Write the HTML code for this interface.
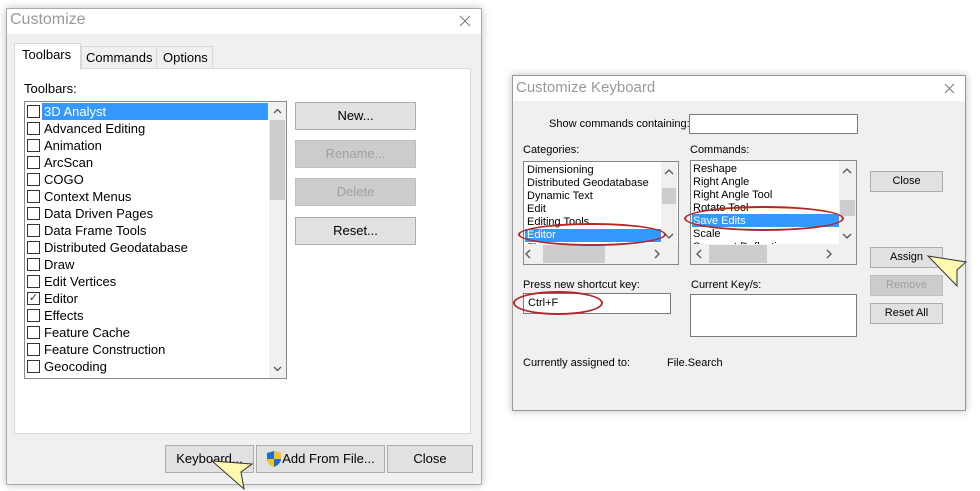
<!DOCTYPE html>
<html><head><meta charset="utf-8"><style>
*{margin:0;padding:0;box-sizing:border-box}
body{width:980px;height:491px;background:#fff;position:relative;overflow:hidden;font-family:"Liberation Sans",sans-serif;color:#000}
.a{position:absolute}
.t{font-size:13px;white-space:nowrap;line-height:17px}
.s{font-size:11px;white-space:nowrap;line-height:13px}
.btn{position:absolute;background:#e1e1e1;border:1px solid #adadad;text-align:center;white-space:nowrap}
.dis{color:#a0a0a0;background:#ccc;border-color:#bfbfbf}
.cb{position:absolute;width:13px;height:13px;border:1px solid #333;background:#fff}
.ell{position:absolute;border:2px solid #b3262b;border-radius:50%}
</style></head><body>
<!-- Left dialog -->
<div class="a" style="left:6px;top:8px;width:476px;height:477px;background:#f0f0f0;border:1px solid #aaa;box-shadow:0 0 8px rgba(0,0,0,.25)"></div>
<div class="a" style="left:7px;top:9px;width:474px;height:25px;background:#fff"></div>
<div class="a" style="left:10px;top:11px;font-size:16px;color:#999">Customize</div>
<svg class="a" style="left:459px;top:15px" width="12" height="12"><path d="M1 1L11 11M11 1L1 11" stroke="#777" stroke-width="1"/></svg>
<!-- tabs -->
<div class="a" style="left:14px;top:68px;width:457px;height:366px;background:#fff;border:1px solid #d9d9d9"></div>
<div class="a t" style="left:81px;top:46px;width:76px;height:23px;background:#f0f0f0;border:1px solid #d9d9d9;padding:2px 4px">Commands</div>
<div class="a t" style="left:156px;top:46px;width:57px;height:23px;background:#f0f0f0;border:1px solid #d9d9d9;padding:2px 6px">Options</div>
<div class="a t" style="left:14px;top:43px;width:67px;height:27px;background:#fff;border:1px solid #d9d9d9;border-bottom:none;padding:2px 7px">Toolbars</div>
<div class="a t" style="left:24px;top:80px">Toolbars:</div>
<!-- list -->
<div class="a" style="left:24px;top:101px;width:263px;height:278px;border:1px solid #828790;background:#fff"></div>
<div class="a" style="left:42px;top:103px;width:226px;height:17px;background:#3399ff"></div>
<div class="a" style="left:269px;top:102px;width:17px;height:276px;background:#f0f0f0"></div>
<div class="a" style="left:270px;top:120px;width:15px;height:80px;background:#cdcdcd"></div>
<svg class="a" style="left:273px;top:108px" width="9" height="6"><path d="M1 5L4.5 1.5L8 5" stroke="#555" fill="none" stroke-width="1.3"/></svg>
<svg class="a" style="left:273px;top:366px" width="9" height="6"><path d="M1 1L4.5 4.5L8 1" stroke="#555" fill="none" stroke-width="1.3"/></svg>
<div class="a" style="left:27px;top:103px">
<div class="cb" style="top:2px"></div><div class="a t" style="left:17px;top:0;color:#fff">3D Analyst</div>
<div class="cb" style="top:19px"></div><div class="a t" style="left:17px;top:17px">Advanced Editing</div>
<div class="cb" style="top:36px"></div><div class="a t" style="left:17px;top:34px">Animation</div>
<div class="cb" style="top:53px"></div><div class="a t" style="left:17px;top:51px">ArcScan</div>
<div class="cb" style="top:70px"></div><div class="a t" style="left:17px;top:68px">COGO</div>
<div class="cb" style="top:87px"></div><div class="a t" style="left:17px;top:85px">Context Menus</div>
<div class="cb" style="top:104px"></div><div class="a t" style="left:17px;top:102px">Data Driven Pages</div>
<div class="cb" style="top:121px"></div><div class="a t" style="left:17px;top:119px">Data Frame Tools</div>
<div class="cb" style="top:138px"></div><div class="a t" style="left:17px;top:136px">Distributed Geodatabase</div>
<div class="cb" style="top:155px"></div><div class="a t" style="left:17px;top:153px">Draw</div>
<div class="cb" style="top:172px"></div><div class="a t" style="left:17px;top:170px">Edit Vertices</div>
<div class="cb" style="top:189px;font-size:11px;line-height:11px;text-align:center;color:#333">✓</div><div class="a t" style="left:17px;top:187px">Editor</div>
<div class="cb" style="top:206px"></div><div class="a t" style="left:17px;top:204px">Effects</div>
<div class="cb" style="top:223px"></div><div class="a t" style="left:17px;top:221px">Feature Cache</div>
<div class="cb" style="top:240px"></div><div class="a t" style="left:17px;top:238px">Feature Construction</div>
<div class="cb" style="top:257px"></div><div class="a t" style="left:17px;top:255px">Geocoding</div>
</div>
<div class="btn t" style="left:295px;top:102px;width:121px;height:28px;line-height:26px">New...</div>
<div class="btn t dis" style="left:295px;top:140px;width:121px;height:28px;line-height:26px">Rename...</div>
<div class="btn t dis" style="left:295px;top:178px;width:121px;height:28px;line-height:26px">Delete</div>
<div class="btn t" style="left:295px;top:217px;width:121px;height:28px;line-height:26px">Reset...</div>
<div class="btn t" style="left:165px;top:445px;width:89px;height:28px;line-height:26px">Keyboard...</div>
<div class="btn t" style="left:256px;top:445px;width:129px;height:28px;line-height:26px;padding-left:16px">Add From File...</div>
<svg class="a" style="left:266px;top:450px" width="16" height="18" viewBox="0 0 16 18"><path d="M8 1 L15 3 L15 9 C15 13 11 16 8 17 C5 16 1 13 1 9 L1 3 Z" fill="#1f6fd1"/><path d="M8 1 L15 3 L15 9 L8 9 Z M1 9 L8 9 L8 17 C5 16 1 13 1 9Z" fill="#f7c325"/></svg>
<div class="btn t" style="left:387px;top:445px;width:86px;height:28px;line-height:26px">Close</div>
<!-- Right dialog -->
<div class="a" style="left:512px;top:75px;width:454px;height:336px;background:#f0f0f0;border:1px solid #999;box-shadow:0 0 8px rgba(0,0,0,.25)"></div>
<div class="a" style="left:513px;top:76px;width:452px;height:25px;background:#fff"></div>
<div class="a" style="left:516px;top:79px;font-size:15px;color:#999">Customize Keyboard</div>
<svg class="a" style="left:944px;top:83px" width="11" height="11"><path d="M1 1L10 10M10 1L1 10" stroke="#777" stroke-width="1"/></svg>
<div class="a s" style="left:549px;top:118px">Show commands containing:</div>
<div class="a" style="left:689px;top:114px;width:169px;height:20px;background:#fff;border:1px solid #7a7a7a"></div>
<div class="a s" style="left:523px;top:144px">Categories:</div>
<div class="a s" style="left:690px;top:144px">Commands:</div>
<div class="a" style="left:523px;top:161px;width:156px;height:104px;background:#fff;border:1px solid #828790"></div>
<div class="a" style="left:525px;top:229px;width:136px;height:13px;background:#3399ff"></div>
<div class="a s" style="left:527px;top:164px;height:80px;overflow:hidden">Dimensioning<br>Distributed Geodatabase<br>Dynamic Text<br>Edit<br>Editing Tools<br><span style="color:#fff">Editor</span><br>Fi</div>
<div class="a" style="left:661px;top:162px;width:16px;height:82px;background:#f0f0f0"></div>
<div class="a" style="left:662px;top:188px;width:14px;height:16px;background:#cdcdcd"></div>
<div class="a" style="left:524px;top:244px;width:154px;height:20px;background:#f0f0f0"></div>
<div class="a" style="left:543px;top:245px;width:62px;height:18px;background:#cdcdcd"></div>
<div class="a" style="left:690px;top:160px;width:167px;height:105px;background:#fff;border:1px solid #828790"></div>
<div class="a" style="left:692px;top:214px;width:147px;height:13px;background:#3399ff"></div>
<div class="a s" style="left:693px;top:163px;height:81px;overflow:hidden">Reshape<br>Right Angle<br>Right Angle Tool<br>Rotate Tool<br><span style="color:#fff">Save Edits</span><br>Scale<br>Segment Deflection</div>
<div class="a" style="left:839px;top:161px;width:17px;height:83px;background:#f0f0f0"></div>
<div class="a" style="left:840px;top:200px;width:15px;height:16px;background:#cdcdcd"></div>
<div class="a" style="left:691px;top:244px;width:165px;height:20px;background:#f0f0f0"></div>
<div class="a" style="left:709px;top:245px;width:58px;height:18px;background:#cdcdcd"></div>
<svg class="a" style="left:0;top:0" width="980" height="491">
<g stroke="#555" fill="none" stroke-width="1.3">
<path d="M665 174L669 170L673 174"/><path d="M665 234L669 238L673 234"/>
<path d="M530 250L526 254L530 258"/><path d="M655 250L659 254L655 258"/>
<path d="M843 173L847 169L851 173"/><path d="M843 234L847 238L851 234"/>
<path d="M701 250L697 254L701 258"/><path d="M827 250L831 254L827 258"/>
</g></svg>
<div class="btn s" style="left:870px;top:171px;width:73px;height:21px;line-height:19px">Close</div>
<div class="btn s" style="left:870px;top:247px;width:73px;height:21px;line-height:19px">Assign</div>
<div class="btn s dis" style="left:870px;top:275px;width:73px;height:21px;line-height:19px">Remove</div>
<div class="btn s" style="left:870px;top:303px;width:73px;height:21px;line-height:19px">Reset All</div>
<div class="a s" style="left:523px;top:279px">Press new shortcut key:</div>
<div class="a s" style="left:691px;top:279px">Current Key/s:</div>
<div class="a" style="left:523px;top:293px;width:148px;height:21px;background:#fff;border:1px solid #7a7a7a"></div>
<div class="a s" style="left:528px;top:297px">Ctrl+F</div>
<div class="a" style="left:690px;top:294px;width:167px;height:43px;background:#fff;border:1px solid #7a7a7a"></div>
<div class="a s" style="left:523px;top:357px">Currently assigned to:</div>
<div class="a s" style="left:667px;top:357px">File.Search</div>
<div class="ell" style="left:518px;top:223px;width:148px;height:23px"></div>
<div class="ell" style="left:684px;top:206px;width:160px;height:25px"></div>
<div class="ell" style="left:513px;top:291px;width:90px;height:24px"></div>
<svg class="a" style="left:0;top:0" width="980" height="491"><polygon points="212,461 252,464 241,472 244,489" fill="#fff8b0" stroke="#333" stroke-width="1"/><polygon points="928,256 966,262 957,270 957,286" fill="#fff8b0" stroke="#333" stroke-width="1"/></svg>
</body></html>
